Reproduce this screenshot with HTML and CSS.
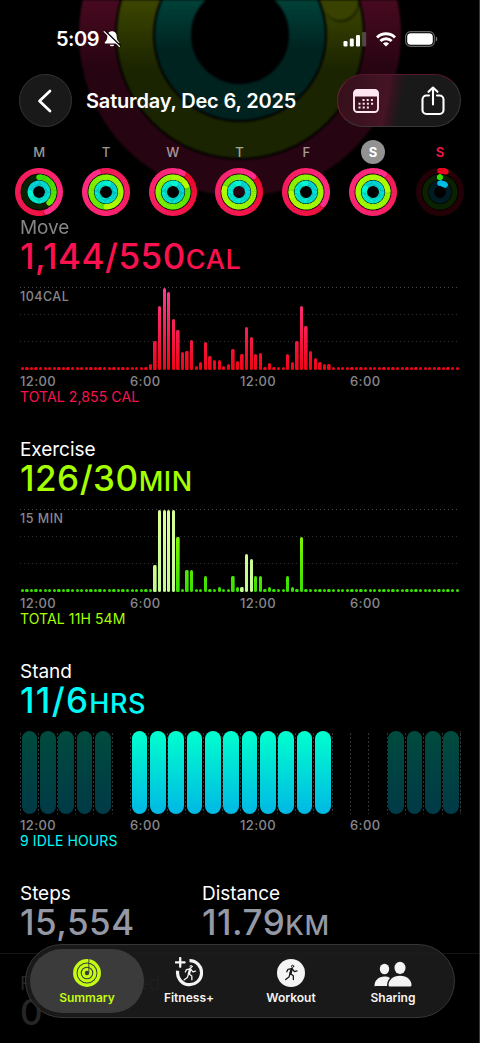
FILE: index.html
```
<!DOCTYPE html>
<html lang="en">

<head>
    <meta charset="utf-8">
    <title>Fitness Summary</title>
    <link rel="stylesheet" href="styles.css">
</head>

<body>
    <div class="screen">
        <!-- Large activity rings, scrolled up behind the header -->
        <svg class="hero-rings" width="480" height="215" viewBox="0 0 480 215">
            <defs>
                <linearGradient id="heroMove" gradientUnits="userSpaceOnUse" x1="0" y1="0" x2="0" y2="70">
                    <stop offset="0" stop-color="#480a20" />
                    <stop offset="1" stop-color="#270411" />
                </linearGradient>
                <linearGradient id="heroExercise" gradientUnits="userSpaceOnUse" x1="0" y1="0" x2="0" y2="70">
                    <stop offset="0" stop-color="#3d4600" />
                    <stop offset="1" stop-color="#1b2400" />
                </linearGradient>
                <linearGradient id="heroStand" gradientUnits="userSpaceOnUse" x1="0" y1="0" x2="0" y2="50">
                    <stop offset="0" stop-color="#004239" />
                    <stop offset="1" stop-color="#002320" />
                </linearGradient>
            </defs>
            <g fill="none" stroke-width="36">
                <circle cx="240" cy="35" r="143" stroke="url(#heroMove)" />
                <circle cx="240" cy="35" r="105" stroke="url(#heroExercise)" />
                <circle cx="240" cy="35" r="67" stroke="url(#heroStand)" />
            </g>
            <circle cx="341" cy="4" r="18" fill="#1a2000" />
            <circle cx="340" cy="2" r="18" fill="#394200" />
        </svg>

        <div class="status-bar">
            <span class="time">5:09</span>
            <svg class="bell" width="18" height="18" viewBox="0 0 18 18">
                <path d="M9 1.200c-3 0-4.700 2.200-4.700 5.100 0 3.300-1 4.600-2.500 6v1.300h14.400v-1.300c-1.500-1.400-2.500-2.700-2.500-6C13.700 3.400 12 1.200 9 1.200zM6.700 14.700a2.400 2.200 0 0 0 4.600 0z" fill="#fff" />
                <path d="M2.200 1.200L17.500 16" stroke="#000" stroke-width="1.800" />
                <path d="M1.200 1.600L16.500 16.400" stroke="#fff" stroke-width="1.300" stroke-linecap="round" />
            </svg>
            <div class="status-icons">
                <svg width="24" height="16" viewBox="0 0 24 16" fill="#fff">
                    <rect x="0.500" y="10" width="4" height="5.500" rx="1.200" />
                    <rect x="6.800" y="7.500" width="4" height="8" rx="1.200" />
                    <rect x="13" y="4" width="4" height="11.500" rx="1.200" />
                    <rect x="19.200" y="1" width="4" height="14.500" rx="1.200" opacity=".25" />
                </svg>
                <svg width="20" height="15" viewBox="0 0 20 15" fill="none" stroke="#fff" stroke-width="2.900">
                    <path d="M1 5.500a12.800 12.800 0 0 1 18 0" />
                    <path d="M4.400 9a8 8 0 0 1 11.200 0" />
                    <path d="M10 14.600L6.900 11.500a4.400 4.400 0 0 1 6.200 0z" fill="#fff" stroke="none" />
                </svg>
                <svg width="33" height="16" viewBox="0 0 33 16">
                    <rect x="0.600" y="0.600" width="28.800" height="14.800" rx="5" fill="none" stroke="#666" stroke-width="1.100" />
                    <rect x="2.200" y="2.200" width="25.600" height="11.600" rx="3.600" fill="#fff" />
                    <path d="M30.800 5.500c2 .8 2 4.200 0 5z" fill="#777" />
                </svg>
            </div>
        </div>

        <div class="nav-bar">
            <div class="back-button">
                <svg width="16" height="26" viewBox="0 0 16 26" fill="none" stroke="#fff" stroke-width="2.700" stroke-linecap="round" stroke-linejoin="round">
                    <path d="M13 3L2.500 13 13 23" />
                </svg>
            </div>
            <div class="nav-title">Saturday, Dec 6, 2025</div>
            <div class="nav-actions">
                <svg width="28" height="26" viewBox="0 0 28 26">
                    <rect x="2" y="2" width="24" height="22" rx="3.500" fill="none" stroke="#ffe6f0" stroke-width="1.900" />
                    <path d="M1.500 8.500V5a3.500 3.500 0 0 1 3.500-3.500h18A3.500 3.500 0 0 1 26.500 5v3.500z" fill="#ffe6f0" />
                    <path d="M10.500 12h12M6.500 15.800h16M6.500 19.600h12" stroke="#ffe6f0" stroke-width="2" stroke-dasharray="2 2.200" />
                </svg>
                <svg width="26" height="30" viewBox="0 0 26 30" fill="none" stroke="#fff" stroke-width="2.100" stroke-linecap="round" stroke-linejoin="round">
                    <path d="M9 9.500H6.500A4 4 0 0 0 2.500 13.500V24a4 4 0 0 0 4 4h13a4 4 0 0 0 4-4V13.500a4 4 0 0 0-4-4H17" />
                    <path d="M13 18.500V1.500M8.500 5.800L13 1.500l4.500 4.300" />
                </svg>
            </div>
        </div>

        <div class="week" id="week"></div>

        <div class="section">
            <div class="label scrolled">Move</div>
            <div class="value move"><span class="num">1,144/550</span><span class="unit">CAL</span></div>
            <div class="chart">
                <div class="chart-max">104CAL</div>
                <div class="bars" id="moveBars"></div>
            </div>
            <div class="hours"><span>12:00</span><span>6:00</span><span>12:00</span><span>6:00</span></div>
            <div class="total move">TOTAL 2,855 CAL</div>
        </div>

        <div class="section">
            <div class="label">Exercise</div>
            <div class="value exercise"><span class="num">126/30</span><span class="unit">MIN</span></div>
            <div class="chart">
                <div class="chart-max">15 MIN</div>
                <div class="bars" id="exerciseBars"></div>
            </div>
            <div class="hours"><span>12:00</span><span>6:00</span><span>12:00</span><span>6:00</span></div>
            <div class="total exercise">TOTAL 11H 54M</div>
        </div>

        <div class="section">
            <div class="label">Stand</div>
            <div class="value stand"><span class="num">11/6</span><span class="unit">HRS</span></div>
            <div class="stand-chart" id="standHours"></div>
            <div class="hours"><span>12:00</span><span>6:00</span><span>12:00</span><span>6:00</span></div>
            <div class="total stand">9 IDLE HOURS</div>
        </div>

        <div class="stats">
            <div class="stat">
                <div class="label">Steps</div>
                <div class="value gray"><span class="num">15,554</span></div>
            </div>
            <div class="stat">
                <div class="label">Distance</div>
                <div class="value gray"><span class="num">11.79</span><span class="unit">KM</span></div>
            </div>
        </div>
        <div class="flights">
            <div class="label">Flights Climbed</div>
            <div class="value"><span class="num">0</span></div>
        </div>

        <div class="tab-bar">
            <div class="tab selected">
                <svg width="28" height="28" viewBox="0 0 28 28" fill="none" stroke="#c3fb12">
                    <circle cx="14" cy="14" r="12.200" stroke-width="3.500" />
                    <circle cx="14" cy="14" r="7.900" stroke-width="3.200" />
                    <circle cx="14" cy="14" r="3.700" stroke-width="3" />
                    <path d="M15.800 0v14" stroke="#3b3b3b" stroke-width="0.900" />
                </svg>
                <span>Summary</span>
            </div>
            <div class="tab">
                <svg width="28" height="30" viewBox="0 0 28 30" fill="none" stroke="#f4f4f4" stroke-linecap="round" stroke-linejoin="round">
                    <path d="M14.500 3.700a12 12 0 1 1-11.800 10" stroke-width="3.200" stroke-linecap="butt" />
                    <path d="M5.200 1v8.800M0.800 5.400h8.800" stroke-width="2.300" />
                    <g transform="translate(8.500 8)">
                        <use href="#runner" />
                    </g>
                </svg>
                <span>Fitness+</span>
            </div>
            <div class="tab">
                <svg width="28" height="28" viewBox="0 0 28 28">
                    <defs>
                        <g id="runner" fill="none" stroke-linecap="round" stroke-linejoin="round">
                            <circle cx="7.600" cy="1.600" r="1.100" stroke-width="1" />
                            <path d="M6.700 4.300L5.400 8.800" stroke-width="2.500" />
                            <path d="M6.500 4L3 4.600 1.800 7M7.500 4.600l2 2.300 2.500-.7M5.600 9l2.700 2 .1 3.800M4.900 9.500l-1 2.900-3.200 2.400" stroke-width="1.300" />
                        </g>
                    </defs>
                    <circle cx="14" cy="14" r="14" fill="#f4f4f4" />
                    <g transform="translate(8 5.700)" stroke="#151515">
                        <use href="#runner" />
                    </g>
                </svg>
                <span>Workout</span>
            </div>
            <div class="tab">
                <svg width="38" height="26" viewBox="0 0 38 26" fill="#f4f4f4">
                    <ellipse cx="10.500" cy="8" rx="4.700" ry="5.300" />
                    <path d="M.5 25c0-5.500 4-9.400 10-9.400 2 0 4 .5 5.500 1.400-2 2-3 4.800-3 8H1.700Q.5 25.500.5 25z" />
                    <ellipse cx="26" cy="6.900" rx="5.500" ry="6.200" />
                    <path d="M14.500 24c0-5 4.500-9.300 11.500-9.300S37.500 19 37.500 24q0 1.500-1.500 1.500H16q-1.500 0-1.500-1.500z" />
                </svg>
                <span>Sharing</span>
            </div>
        </div>
    </div>
    <script src="activity.js"></script>
</body>

</html>
```
FILE: styles.css
```
body {
    margin: 0;
    background-color: #000;
    color: #fff;
    font-family: Inter, "Liberation Sans", sans-serif;
}

.screen {
    position: relative;
    width: 479px;
    height: 1043px;
    overflow: hidden;
    border-right: 1px solid #383838;
    background-color: #000;
}

/* Lies behind the header */
.hero-rings {
    position: absolute;
    top: 0;
    left: 0;
    filter: blur(1px);
}

.status-bar {
    position: relative;
    display: flex;
    align-items: center;
    height: 24px;
    padding: 27px 41px 0 56px;
}

.time {
    font-size: 20px;
    font-weight: 600;
    letter-spacing: -0.5px;
}

.bell {
    margin-left: 4px;
}

.status-icons {
    display: flex;
    align-items: center;
    gap: 9px;
    margin-left: auto;
}

.nav-bar {
    position: relative;
    display: flex;
    align-items: center;
    height: 53px;
    margin-top: 23px;
    padding: 0 18px 0 19px;
}

.back-button,
.nav-actions {
    box-sizing: border-box;
    height: 53px;
    border: 1px solid #343434;
    border-radius: 27px;
    background-color: #191919;
    display: flex;
    align-items: center;
}

.back-button {
    width: 53px;
    justify-content: center;
    padding-right: 2px;
}

.nav-title {
    margin-left: 14px;
    font-size: 20px;
    font-weight: 600;
    letter-spacing: -0.170px;
    white-space: nowrap;
}

.nav-actions {
    width: 124px;
    margin-left: auto;
    padding: 0 14px;
    justify-content: space-between;
    background: linear-gradient(100deg, #331019 0%, #451426 40%, #35131e 44%, #191919 52%);
    border-color: #56172f #383838 #383838 #6b2030;
}

.week {
    position: relative;
    display: grid;
    grid-template-columns: repeat(7, 66.8px);
    width: 479px;
    justify-content: center;
    height: 77px;
    margin-top: 13px;
}

.day {
    display: flex;
    flex-direction: column;
    align-items: center;
}

.day-name {
    width: 24px;
    height: 24px;
    line-height: 24px;
    border-radius: 50%;
    text-align: center;
    font-size: 13px;
    font-weight: 500;
    color: rgba(255, 255, 255, 0.6);
}

.day-name.current {
    background-color: #929292;
    color: #fff;
    font-weight: 700;
}

.day-name.today {
    color: #f5144c;
    font-weight: 600;
}

.day svg {
    margin-top: 4px;
}

.section {
    position: relative;
    height: 222px;
    padding: 0 19px 0 20px;
}

.label {
    height: 22px;
    line-height: 22px;
    font-size: 19px;
    letter-spacing: -0.05px;
}

.label.scrolled {
    color: #858585;
    letter-spacing: -0.1px;
    filter: blur(0.6px);
}

.value {
    height: 38px;
    line-height: 34px;
    white-space: nowrap;
}

.num {
    font-size: 35px;
    font-weight: 450;
    letter-spacing: 0.5px;
}

.unit {
    font-size: 27px;
    font-weight: 500;
    letter-spacing: 0.6px;
}

.move {
    color: #fb114f;
}

.exercise {
    color: #a5ff00;
}

.stand {
    color: #00fbf6;
}

.stand .num {
    letter-spacing: 1.3px;
}

.gray {
    color: #9499a5;
}

.chart {
    height: 83px;
    margin-top: 10px;
    background:
        repeating-linear-gradient(90deg, #484848 0 1.500px, transparent 1.500px 4px) 0 0 / 100% 1px no-repeat,
        repeating-linear-gradient(90deg, #303030 0 1.500px, transparent 1.500px 4px) 0 27px / 100% 1px no-repeat,
        repeating-linear-gradient(90deg, #303030 0 1.500px, transparent 1.500px 4px) 0 54px / 100% 1px no-repeat;
}

.chart-max {
    height: 20px;
    line-height: 19px;
    font-size: 12.500px;
    font-weight: 550;
    letter-spacing: 0.5px;
    color: #88888c;
}

.bars {
    display: flex;
    align-items: flex-end;
    height: 83px;
    margin-top: -20px;
}

.bar {
    flex: 1;
    height: 83px;
    display: flex;
    align-items: flex-end;
    justify-content: center;
}

.bar i {
    width: 3.300px;
    border-radius: 1.500px;
    background: linear-gradient(#ff3a92, #f00414) bottom / 100% 83px;
}

#exerciseBars .bar i {
    background-image: linear-gradient(#a4ff00, #36df00);
}

#exerciseBars .bar i.workout {
    background-image: linear-gradient(#dcff94, #c2fb90);
}

.stand-chart {
    display: grid;
    grid-template-columns: repeat(24, 1fr);
    height: 83px;
    margin-top: 10px;
    background: repeating-linear-gradient(#000 0 2.500px, transparent 2.500px 4px),
        repeating-linear-gradient(90deg, #333 0 1px, transparent 1px 18.333px);
    border-right: 1px dotted #333;
    margin-right: -1px;
}

.hour.idle,
.hour.stood {
    margin: 0 1px 0 1.500px;
    border-radius: 8px;
    background: linear-gradient(#00ffce, #00b8e4);
}

.hour.idle {
    background: linear-gradient(#004b3e, #003a47);
}

/* The 5 AM hour has no grid lines */
.hour.blank {
    background-color: #000;
    margin: 0 1px;
}

.hours {
    display: grid;
    grid-template-columns: repeat(4, 110px);
    height: 17px;
    line-height: 18px;
    margin-top: 2px;
    font-size: 13px;
    font-weight: 550;
    letter-spacing: 0.4px;
    color: #88888c;
}

.total {
    height: 16px;
    line-height: 16px;
    font-size: 14px;
    letter-spacing: 0.1px;
}

.stats {
    position: relative;
    display: flex;
    height: 70px;
    padding-left: 20px;
    border-bottom: 1px solid #151515;
}

.stat {
    width: 182px;
}

.flights {
    padding: 19px 20px 0;
    color: #262626;
}

.flights .label {
    letter-spacing: 0.1px;
}

/* Floats over the page */
.tab-bar {
    position: absolute;
    left: 25px;
    top: 944px;
    box-sizing: border-box;
    width: 430px;
    height: 74px;
    padding: 4px;
    border: 1px solid #363636;
    border-radius: 37px;
    background-color: rgba(29, 29, 29, 0.85);
    display: flex;
}

.tab {
    width: 102px;
    height: 64px;
    display: flex;
    flex-direction: column;
    align-items: center;
    justify-content: flex-end;
    font-size: 12px;
    font-weight: 600;
    letter-spacing: 0;
    color: #f4f4f4;
}

.tab span {
    height: 16px;
    line-height: 16px;
    margin: 3px 0 7px;
}

.tab.selected {
    width: 114px;
    margin-right: -6px;
    border-radius: 32px;
    background-color: #3b3b3b;
    color: #c3fb12;
}
```
FILE: activity.js
```
// Fractions of the goal: move, exercise, stand
var days = [
    { name: 'M', rings: [1.44, 0.38, 1.74] },
    { name: 'T', rings: [1.94, 1.5, 2.05] },
    { name: 'W', rings: [1.08, 1.18, 2.05] },
    { name: 'T', rings: [1.12, 1.79, 2.0] },
    { name: 'F', rings: [1.35, 2.74, 2.0] },
    { name: 'S', rings: [2.09, 4.23, 1.83], cls: 'current' },
    { name: 'S', rings: [0.045, 0.001, 0.1], cls: 'today' }
];

var ringStyles = [
    { r: 21.2, from: [232, 4, 30], to: [255, 45, 135], track: '#230006' },
    { r: 14.8, from: [56, 222, 0], to: [178, 255, 0], track: '#0a2200' },
    { r: 8.7, from: [0, 186, 232], to: [0, 245, 208], track: '#001b22' }
];

function mix(a, b, t) {
    return 'rgb(' + a.map(function (v, i) {
        return Math.round(v + (b[i] - v) * t);
    }).join(',') + ')';
}

function point(r, turn) {
    var a = turn * 2 * Math.PI;
    return [24 + r * Math.sin(a), 24 - r * Math.cos(a)];
}

function ring(style, p) {
    var out = '<circle cx="24" cy="24" r="' + style.r + '" stroke="' + style.track + '"/>';
    var start = Math.max(0, p - 1);
    var steps = 48;
    var total = Math.max(p, 1);
    for (var i = 0; i < steps; i++) {
        var t0 = start + (p - start) * i / steps;
        var t1 = start + (p - start) * (i + 1) / steps;
        var a = point(style.r, t0 - (i ? 0.004 : 0));
        var b = point(style.r, t1);
        out += '<path d="M' + a + 'A' + style.r + ' ' + style.r + ' 0 0 1 ' + b + '" stroke="' +
            mix(style.from, style.to, t1 / total) + '"' +
            (i == steps - 1 || (i == 0 && p < 1) ? ' stroke-linecap="round"' : '') + '/>';
        // shadow ahead of the overlapping tip
        if (i == steps - 3 && p > 1) {
            var s = point(style.r, p + 0.008);
            out += '<circle cx="' + s[0] + '" cy="' + s[1] + '" r="2.700" fill="rgba(0,0,0,.18)" stroke="none"/>';
        }
    }
    return out;
}

document.getElementById('week').innerHTML = days.map(function (day) {
    return '<div class="day"><div class="day-name ' + (day.cls || '') + '">' + day.name + '</div>' +
        '<svg width="48" height="48" viewBox="0 0 48 48" fill="none" stroke-width="5.500">' +
        day.rings.map(function (p, i) {
            return ring(ringStyles[i], p);
        }).join('') + '</svg></div>';
}).join('');

// One value per 15 minutes, starting at the given slot; all other slots are empty
var moveStart = 28;
var move = [6.5, 29, 64, 82.5, 78, 51, 40, 18, 19, 30.5, 4.5, 8.5, 28.5, 14, 10, 10, 4, 6, 21, 9,
    16, 43, 33, 16.5, 17, 3, 7.5, 3, 3, 3, 16, 8, 29, 64, 44, 19, 12, 8, 6, 6.5];
var exerciseStart = 29;
var exercise = [27, 82.5, 82.5, 82.5, 82.5, 55, 3, 22, 22, 3, 3, 16.5, 3, 3, 5, 3, 3, 16.5, 5,
    5, 38.5, 33, 16.5, 16.5, 3, 5, 3, 3, 3, 16.5, 5, 3, 55];
var workoutSlots = [29, 30, 31, 32, 33, 48, 49, 50];

function drawBars(id, start, values, workouts) {
    var html = '';
    for (var i = 0; i < 96; i++) {
        var h = values[i - start] || 3;
        var cls = workouts.indexOf(i) >= 0 ? ' class="workout"' : '';
        html += '<div class="bar"><i' + cls + ' style="height:' + h + 'px"></i></div>';
    }
    document.getElementById(id).innerHTML = html;
}

drawBars('moveBars', moveStart, move, []);
drawBars('exerciseBars', exerciseStart, exercise, workoutSlots);

// i = idle, s = stood, b = blank, . = no data
document.getElementById('standHours').innerHTML = 'iiiiibsssssssssss...iiii'.split('').map(function (c) {
    var cls = { i: 'idle', s: 'stood', b: 'blank' }[c] || '';
    return '<div class="hour ' + cls + '"></div>';
}).join('');
```
